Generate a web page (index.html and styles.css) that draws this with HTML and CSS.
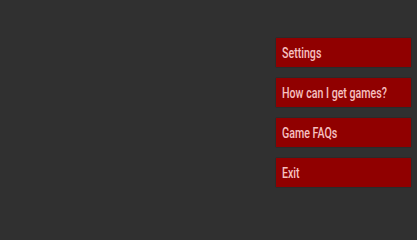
FILE: index.html
```html
<!DOCTYPE html>
<html>
<head>
<meta charset="utf-8">
<link rel="stylesheet" href="styles.css">
</head>
<body>
<div class="menu">
  <div class="btn"><span class="label">Settings</span></div>
  <div class="btn"><span class="label">How can I get games?</span></div>
  <div class="btn"><span class="label">Game FAQs</span></div>
  <div class="btn"><span class="label">Exit</span></div>
</div>
</body>
</html>
```
FILE: styles.css
```css
html, body {
  margin: 0;
  padding: 0;
  background: #303030;
  width: 417px;
  height: 200px;
  overflow: hidden;
}
.menu {
  display: flex;
  flex-direction: column;
  align-items: flex-end;
  gap: 11px;
  padding-top: 38px;
  padding-right: 6px;
}
.btn {
  box-sizing: border-box;
  width: 135px;
  height: 29px;
  background: #900000;
  color: #f6c0c0;
  font-family: Roboto, "Liberation Sans", sans-serif;
  font-size: 14px;
  font-weight: 500;
  line-height: 28px;
  padding-top: 1px;
  padding-left: 6px;
  box-shadow: 0 0 1px rgba(0,0,0,0.5);
  white-space: nowrap;
}
.label {
  display: inline-block;
  transform: scaleX(0.76);
  transform-origin: left center;
}
```
